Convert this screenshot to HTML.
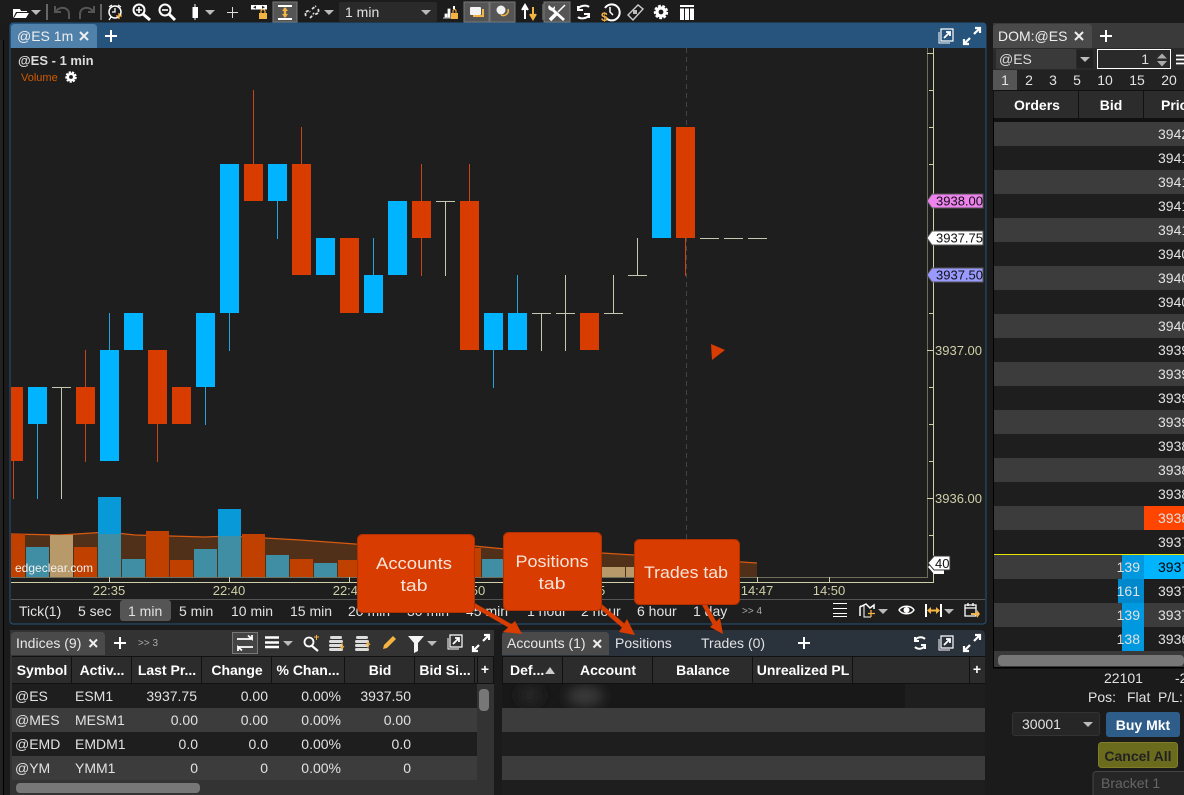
<!DOCTYPE html>
<html><head><meta charset="utf-8"><title>Chart</title>
<style>
html,body{margin:0;padding:0;background:#1b1b1b;width:1184px;height:795px;overflow:hidden}
svg{display:block;position:absolute;left:0;top:0}
text{font-family:"Liberation Sans",sans-serif;font-size:14px;fill:#e2e2e2}
.b{font-weight:bold;fill:#fff}
.m{text-anchor:middle}
.e{text-anchor:end}
.ax{font-size:13px;fill:#cfcfa8}
.c{font-size:17px;fill:#f8e4da;text-anchor:middle}
.w{stroke:#fff;fill:none}
</style></head><body>
<svg width="1184" height="795" viewBox="0 0 1184 795" xmlns="http://www.w3.org/2000/svg">
<defs>
<g id="gear"><circle r="4" fill="none" stroke="#fff" stroke-width="3.2"/><circle r="6" fill="none" stroke="#fff" stroke-width="2.4" stroke-dasharray="2.7 1.5"/></g>
<g id="pop"><path d="M-5-7H7V5H-5Z" class="w" stroke-width="1.2"/><path d="M-7-4V7H4" class="w" stroke-width="1"/><path d="M-2 2L4-4M0-4H4V0" stroke="#fff" stroke-width="1.800" fill="none"/></g>
<g id="full"><path d="M2-2L7-7M3-8H8V-3M-2 2L-7 7M-8 3V8H-3" stroke="#fff" stroke-width="2.2" fill="none"/></g>
<path id="car" d="M0 0H10L5 5Z" fill="#bbb"/>
<filter id="bl" x="-50%" y="-50%" width="200%" height="200%"><feGaussianBlur stdDeviation="6"/></filter>
<clipPath id="rowclip"><rect x="502" y="684" width="403" height="24"/></clipPath>
</defs>

<!-- left strip -->
<rect x="3" y="40" width="1" height="755" fill="#000"/>
<rect x="0" y="40" width="3" height="755" fill="#222"/>

<!-- top toolbar -->
<rect width="1184" height="23" fill="#1c1c1c"/>
<path d="M13 9H20L21 11H27V12H16L13 18ZM14 18L17 13H29L26 18Z" fill="#fff"/>
<use href="#car" x="31" y="10"/>
<rect x="46" y="4" width="2" height="16" fill="#666"/>
<path d="M55 6V12H61M56 11C60 6 69 7 69 14V19" stroke="#555" stroke-width="2" fill="none"/>
<path d="M94 6V12H88M93 11C89 6 80 7 80 14V19" stroke="#555" stroke-width="2" fill="none"/>
<rect x="100" y="4" width="2" height="16" fill="#666"/>
<circle cx="115" cy="12" r="6" class="w" stroke-width="1.5"/><path d="M115 8V12H112M109 7L112 5M118 5L121 7M111 17L109 20" stroke="#fff" stroke-width="1.3" fill="none"/><path d="M116 16H122M119 13V19" stroke="#f5b342" stroke-width="1.3"/>
<circle cx="139" cy="10" r="5.5" class="w" stroke-width="2"/><path d="M136 10H142M139 7V13" stroke="#fff" stroke-width="1.6"/><path d="M143 14L150 20" stroke="#fff" stroke-width="3"/>
<circle cx="165" cy="10" r="5.5" class="w" stroke-width="2"/><path d="M162 10H168" stroke="#fff" stroke-width="1.6"/><path d="M169 14L175 20" stroke="#fff" stroke-width="3"/>
<rect x="192.500" y="7" width="5.500" height="11" fill="#fff"/><path d="M195 4V20" stroke="#fff"/>
<use href="#car" x="205" y="10"/>
<path d="M227 12.500H238M232.500 7V18" stroke="#ddd"/>
<rect x="251" y="5" width="16" height="4.500" fill="#fff"/><path d="M253 7.200L256 5.800V8.700ZM265 7.200L262 5.800V8.700Z" fill="#222"/>
<rect x="259" y="13" width="8" height="6" fill="#f5b342"/><path d="M261 13V11.500A2 2 0 0 1 265 11.500V13" stroke="#f5b342" fill="none" stroke-width="1.200"/>
<rect x="273" y="2" width="24" height="20" fill="#555" stroke="#777"/><path d="M278 6H292M278 19H292" stroke="#fff" stroke-width="2"/><path d="M285 8V17" stroke="#f5b342" stroke-width="2.400"/><path d="M285 7L288 11H282ZM285 18L288 14H282Z" fill="#f5b342"/>
<path d="M306 16C304 13 308 9 310 12M318 9C320 12 316 16 313 13M310 18L313 15M312 9L316 6" stroke="#ddd" stroke-width="1.800" fill="none" stroke-dasharray="3 1"/>
<use href="#car" x="324" y="10"/>
<rect x="339" y="2" width="98" height="20" rx="2" fill="#2a2a2a"/><text x="345" y="17">1 min</text><use href="#car" x="421" y="10"/>
<path d="M443 18H452M445 14H447V17H445ZM448 9H450V17H448Z" fill="#fff" stroke="#fff" stroke-width=".8"/><rect x="451" y="13" width="7" height="6" fill="#f5b342"/><path d="M453 13V11A1.500 1.500 0 0 1 456 11V13" stroke="#f5b342" fill="none"/><rect x="453" y="6" width="2" height="3" fill="#fff"/>
<rect x="464" y="2" width="25" height="20" fill="#555" stroke="#777"/><rect x="490" y="2" width="25" height="20" fill="#555" stroke="#777"/>
<rect x="470" y="7" width="11" height="8" rx="1" fill="#f4f4f4"/><path d="M473 16H483V9" stroke="#f5b342" stroke-width="2" fill="none"/>
<circle cx="501" cy="10" r="4.500" fill="#f0f0f0"/><path d="M508 9A5 5 0 0 1 501 15A5 5 0 0 0 508 9Z" fill="#f5b342" stroke="#f5b342" stroke-width="1.500"/>
<path d="M525 19V8M522 10L525 5L528 10" stroke="#fff" stroke-width="2" fill="#fff"/><path d="M533 7V16M530 14L533 19L536 14" stroke="#f5b342" stroke-width="2" fill="#f5b342"/>
<rect x="542" y="4" width="2" height="16" fill="#555"/><rect x="544" y="2" width="26" height="20" fill="#555" stroke="#777"/>
<path d="M553 10L564 20" stroke="#fff" stroke-width="2.800"/><path d="M549 5C547 8 549 11 553 11C555 10 555 8 555 6L553 8L551 7Z" fill="#fff"/><path d="M565 5L558 12" stroke="#fff" stroke-width="1.500"/><path d="M557 13L550 20" stroke="#fff" stroke-width="3.500"/>
<path d="M578 9C580 5 587 5 589 7M578 6V10H583M589 15C587 19 580 19 578 17M589 18V14H584" stroke="#fff" stroke-width="2" fill="none"/>
<path d="M605 8A8 8 0 1 1 606 18" class="w" stroke-width="2"/><path d="M610 7V12L613 15" class="w" stroke-width="1.500"/><text x="601" y="21" style="font-size:12px;font-weight:bold;fill:#f5b342">$</text>
<path d="M628 15L638 5L643 9L633 20Z" stroke="#ccc" stroke-width="1.400" fill="none"/><rect x="633" y="10" width="4" height="4" fill="#bbb"/>
<use href="#gear" x="661" y="12"/>
<path d="M680 5H694V7H680ZM680 8.500H684V20H680ZM685 8.500H689V20H685ZM690 8.500H694V20H690Z" fill="#fff"/>

<!-- Chart panel -->
<rect x="10" y="23" width="976" height="601" rx="3" fill="#1e1e1e" stroke="#27547c"/>
<path d="M10 48V27Q10 23 14 23H982Q986 23 986 27V48Z" fill="#27547c"/>
<path d="M11 48V28Q11 24 15 24H93Q97 24 97 28V48Z" fill="#4f81aa"/>
<text x="17" y="41" style="font-size:14px;fill:#eee">@ES 1m</text>
<path d="M80 32L88 40M88 32L80 40" stroke="#eee" stroke-width="2"/>
<path d="M105 36H117M111 30V42" stroke="#fff" stroke-width="2"/>
<use href="#pop" x="946" y="36"/><use href="#full" x="972" y="36"/>
<text x="18" y="65" style="font-size:13px;font-weight:bold;fill:#ddd">@ES - 1 min</text>
<text x="21" y="81" style="font-size:11px;fill:#d05a00">Volume</text>
<use href="#gear" x="71" y="77" transform="translate(14.200 15.400) scale(.8)"/>

<!-- crosshair dashed -->
<path d="M686.500 48V540" stroke="#444" stroke-dasharray="5 4"/>

<!-- volume -->
<path d="M11 534L60 535L108 532L135 535L205 537L230 536L300 540L355 544L474 546L505 549L602 553L634 555L757 563V577H11Z" fill="#51301a"/>
<path d="M11 534L60 535L108 532L135 535L205 537L230 536L300 540L355 544L474 546L505 549L602 553L634 555L757 563" fill="none" stroke="#d85a10" stroke-width="1.200"/>
<g fill="#c04000"><rect x="11" y="534" width="14" height="43"/><rect x="74" y="547" width="23" height="30"/><rect x="146" y="531" width="23" height="46"/><rect x="170" y="560" width="23" height="17"/><rect x="242" y="534" width="23" height="43"/><rect x="290" y="559" width="23" height="18"/><rect x="338" y="560" width="23" height="17"/><rect x="458" y="548" width="23" height="29"/></g>
<g fill="#408ea3"><rect x="26" y="547" width="23" height="30"/><rect x="98" y="534" width="23" height="43"/><rect x="122" y="559" width="23" height="18"/><rect x="194" y="549" width="23" height="28"/><rect x="218" y="536" width="23" height="41"/><rect x="266" y="555" width="23" height="22"/><rect x="314" y="563" width="23" height="14"/><rect x="482" y="559" width="23" height="18"/></g>
<g fill="#0899d9"><rect x="98" y="497" width="23" height="37"/><rect x="218" y="509" width="23" height="27"/></g>
<g fill="#b89a6a"><rect x="50" y="535" width="23" height="42"/><rect x="602" y="567" width="23" height="10"/><rect x="626" y="567" width="23" height="10"/></g>
<text x="15" y="572" style="font-size:12px;fill:#f0f0f0">edgeclear.com</text>

<!-- wicks -->
<g stroke-width="1" fill="none">
<path stroke="#c8431a" d="M13.500 461V499M85.500 350V462M157.500 424V462M253.500 90V164M301.500 127V164M421.500 164V276M469.500 164V201M685.500 238V276"/>
<path stroke="#1ea4de" d="M37.500 424V499M109.500 313V350M205.500 387V425M229.500 313V351M277.500 201V239M373.500 238V275M493.500 350V388M517.500 275V313"/>
<path stroke="#c8c8b0" d="M61.500 387V499M445.500 201V276M541.500 313V351M565.500 275V351M613.500 275V313M637.500 238V275"/>
</g>
<g stroke="#c8c8b0" stroke-width="1"><path d="M52 387.500H71M436 201.500H455M532 313.500H551M556 313.500H575M604 313.500H623M628 275.500H647M700 238.500H719M724 238.500H743M748 238.500H767"/></g>
<g fill="#00b4ff"><rect x="28" y="387" width="19" height="37"/><rect x="100" y="350" width="19" height="111"/><rect x="124" y="313" width="19" height="37"/><rect x="196" y="313" width="19" height="74"/><rect x="220" y="164" width="19" height="149"/><rect x="268" y="164" width="19" height="37"/><rect x="316" y="238" width="19" height="37"/><rect x="364" y="275" width="19" height="38"/><rect x="388" y="201" width="19" height="74"/><rect x="484" y="313" width="19" height="37"/><rect x="508" y="313" width="19" height="37"/><rect x="652" y="127" width="19" height="111"/></g>
<g fill="#d83c00"><rect x="11" y="387" width="12" height="74"/><rect x="76" y="387" width="19" height="37"/><rect x="148" y="350" width="19" height="74"/><rect x="172" y="387" width="19" height="37"/><rect x="244" y="164" width="19" height="37"/><rect x="292" y="164" width="19" height="111"/><rect x="340" y="238" width="19" height="75"/><rect x="412" y="201" width="19" height="37"/><rect x="460" y="201" width="19" height="149"/><rect x="580" y="313" width="19" height="37"/><rect x="676" y="127" width="19" height="111"/></g>
<path d="M711 344L725 350L712 360Z" fill="#d83c00"/>

<!-- axes -->
<path d="M927.500 48V577.500H11" stroke="#6e6e5c" fill="none"/>
<path d="M933.500 48V582.500H11" stroke="#cfcfa8" fill="none"/>
<g stroke="#cfcfa8"><path d="M927 53.500H933M929 90.500H933M929 127.500H933M929 164.500H933M927 201.500H933M929 238.500H933M929 276.500H933M929 313.500H933M927 350.500H933M929 387.500H933M929 424.500H933M929 461.500H933M927 498.500H933M929 535.500H933M109.500 577V582M229.500 577V582M349.500 577V582M469.500 577V582M589.500 577V582M757.500 577V582M829.500 577V582"/></g>
<text x="935" y="355" style="font-size:13px;fill:#cfcfa8">3937.00</text><text x="935" y="503" style="font-size:13px;fill:#cfcfa8">3936.00</text>
<g><text class="ax m" x="109" y="595">22:35</text><text class="ax m" x="229" y="595">22:40</text><text class="ax m" x="349" y="595">22:45</text><text class="ax m" x="469" y="595">22:50</text><text class="ax m" x="589" y="595">22:55</text><text class="ax m" x="757" y="595">14:47</text><text class="ax m" x="829" y="595">14:50</text></g>

<!-- price labels -->
<g stroke="#555"><path d="M927 201L932 194H983V208H932Z" fill="#ee82ee"/><path d="M927 238L932 231H983V245H932Z" fill="#fff"/><path d="M927 275L932 268H983V282H932Z" fill="#9999ff"/></g>
<g><text x="936" y="205.500" style="font-size:13px;fill:#111">3938.00</text><text x="936" y="242.500" style="font-size:13px;fill:#111">3937.75</text><text x="936" y="279.500" style="font-size:13px;fill:#111">3937.50</text></g>
<path d="M928 567L934 561H944V574H934Z" fill="#fff"/>
<path d="M928 563L934 556H950V570H934Z" fill="#fff" stroke="#333"/><text x="935" y="568" style="font-size:13px;fill:#111">40</text>

<!-- chart bottom bar -->
<path d="M11 599.500H985" stroke="#555"/>
<rect x="120" y="600" width="51" height="21" rx="3" fill="#555"/>
<g><text x="19" y="616">Tick(1)</text><text x="78" y="616">5 sec</text><text x="128" y="616">1 min</text><text x="179" y="616">5 min</text><text x="231" y="616">10 min</text><text x="290" y="616">15 min</text><text x="348" y="616">20 min</text><text x="407" y="616">30 min</text><text x="466" y="616">45 min</text><text x="527" y="616">1 hour</text><text x="581" y="616">2 hour</text><text x="637" y="616">6 hour</text><text x="693" y="616">1 day</text><text x="742" y="614" style="font-size:10px;fill:#aaa">&gt;&gt; 4</text></g>
<path d="M833 603.500H847M833 608.500H847M833 613.500H847M833 616.500H847" stroke="#fff"/>
<path d="M860 616V607L866 604L870 608L874 605V609" class="w" stroke-width="1.500"/><path d="M860 606H864V617H871" class="w" stroke-width="1"/><path d="M871 610V617M868 613.500H875" stroke="#f5b342" stroke-width="1.300"/>
<use href="#car" x="878" y="609"/>
<path d="M899 610C902 605 911 605 914 610C911 615 902 615 899 610Z" class="w" stroke-width="1.400"/><circle cx="906.500" cy="610" r="3" fill="#fff"/>
<path d="M926 604V617M941 604V617" stroke="#fff" stroke-width="2"/><path d="M930 610.500H937" stroke="#f5b342" stroke-width="2"/><path d="M927 610.500L931 607V614ZM940 610.500L936 607V614Z" fill="#f5b342"/>
<use href="#car" x="944" y="609"/>
<path d="M965 605H976V616H965Z" class="w" stroke-width="1.300"/><path d="M965 608H976M968 603V606M973 603V606" stroke="#fff" stroke-width="1.300"/><path d="M971 613H977V610L980 614L977 618V615H971Z" fill="#f5b342"/>

<!-- Indices panel -->
<rect x="10" y="630" width="484" height="165" fill="#333"/>
<path d="M11 655V636Q11 632 15 632H101Q105 632 105 636V655Z" fill="#4a4a4a"/>
<text x="16" y="648" style="fill:#e8e8e8">Indices (9)</text>
<path d="M89.500 639.500L97 647M97 639.500L89.500 647" stroke="#eee" stroke-width="2"/>
<path d="M114 643H126M120 637V649" stroke="#fff" stroke-width="2"/>
<text x="138" y="646" style="font-size:10px;fill:#aaa">&gt;&gt; 3</text>
<rect x="232.500" y="632.500" width="25" height="21" fill="#444" stroke="#777"/>
<path d="M237 639H252M248 635.500L252 639V635M253 647H238M242 650.500L238 647V651" stroke="#fff" stroke-width="1.800" fill="none"/>
<path d="M265 637.500H279M265 642.500H279M265 647H279" stroke="#fff" stroke-width="2.500"/><use href="#car" x="283" y="641" />
<circle cx="309" cy="642" r="4.500" class="w" stroke-width="1.800"/><path d="M312 646L318 651" stroke="#fff" stroke-width="2.200"/><path d="M314 637H319M316.500 635V640" stroke="#f5b342"/>
<g fill="#ddd"><rect x="329" y="640" width="14" height="3" rx="1.500"/><rect x="329" y="644" width="14" height="3" rx="1.500"/><rect x="329" y="648" width="14" height="3" rx="1.500"/><rect x="330" y="636" width="12" height="3" rx="1.500"/></g><path d="M342 642V648M340 646L342 649L344 646" stroke="#f5b342" fill="none"/>
<g fill="#ddd"><rect x="355" y="640" width="14" height="3" rx="1.500"/><rect x="355" y="644" width="14" height="3" rx="1.500"/><rect x="355" y="648" width="14" height="3" rx="1.500"/><rect x="356" y="636" width="12" height="3" rx="1.500"/></g><path d="M368 643V649M366 645L368 642L370 645" stroke="#f5b342" fill="none"/>
<path d="M383 649L384 645L393 636L396 639L387 648Z" fill="#f5b342"/>
<path d="M408 636H424L418 643V651L414 653V643Z" fill="#f4f4f4"/><use href="#car" x="427" y="641"/>
<use href="#pop" x="455" y="642"/><use href="#full" x="481" y="643"/>

<!-- Indices table -->
<rect x="12" y="656" width="482" height="28" fill="#111"/>
<g fill="#2c2c2c"><rect x="12" y="657" width="59" height="26"/><rect x="72" y="657" width="59" height="26"/><rect x="132" y="657" width="69" height="26"/><rect x="202" y="657" width="69" height="26"/><rect x="272" y="657" width="72" height="26"/><rect x="345" y="657" width="69" height="26"/><rect x="415" y="657" width="59" height="26"/><rect x="475" y="657" width="2" height="26"/><rect x="478" y="657" width="15" height="26"/></g>
<g font-weight="bold"><text class="b m" x="42" y="675">Symbol</text><text class="b m" x="102" y="675">Activ...</text><text class="b m" x="167" y="675">Last Pr...</text><text class="b m" x="237" y="675">Change</text><text class="b m" x="308" y="675">% Chan...</text><text class="b m" x="380" y="675">Bid</text><text class="b m" x="445" y="675">Bid Si...</text><text class="b m" x="485" y="674">+</text></g>
<rect x="12" y="684" width="465" height="24" fill="#1e1e1e"/><rect x="12" y="708" width="465" height="24" fill="#3c3c3c"/><rect x="12" y="732" width="465" height="24" fill="#1e1e1e"/><rect x="12" y="756" width="465" height="24" fill="#3c3c3c"/>
<rect x="479" y="689" width="10" height="22" rx="4" fill="#777"/>
<rect x="16" y="783" width="184" height="10" rx="4" fill="#777"/>
<g><text x="15" y="701">@ES</text><text x="75" y="701">ESM1</text><text class="e" x="197" y="701">3937.75</text><text class="e" x="268" y="701">0.00</text><text class="e" x="341" y="701">0.00%</text><text class="e" x="411" y="701">3937.50</text>
<text x="15" y="725">@MES</text><text x="75" y="725">MESM1</text><text class="e" x="198" y="725">0.00</text><text class="e" x="268" y="725">0.00</text><text class="e" x="341" y="725">0.00%</text><text class="e" x="411" y="725">0.00</text>
<text x="15" y="749">@EMD</text><text x="75" y="749">EMDM1</text><text class="e" x="198" y="749">0.0</text><text class="e" x="268" y="749">0.0</text><text class="e" x="341" y="749">0.00%</text><text class="e" x="411" y="749">0.0</text>
<text x="15" y="773">@YM</text><text x="75" y="773">YMM1</text><text class="e" x="198" y="773">0</text><text class="e" x="268" y="773">0</text><text class="e" x="341" y="773">0.00%</text><text class="e" x="411" y="773">0</text></g>

<!-- Accounts panel -->
<path d="M502 656V635Q502 630 507 630H980Q985 630 985 635V656Z" fill="#2a323c"/>
<rect x="502" y="656" width="483" height="139" fill="#1e1e1e"/>
<path d="M502 655V636Q502 632 506 632H605Q609 632 609 636V655Z" fill="#4a4a4a"/>
<text x="507" y="648" style="fill:#e8e8e8">Accounts (1)</text>
<path d="M593.500 640L601 647.500M601 640L593.500 647.500" stroke="#eee" stroke-width="2"/>
<text x="615" y="648">Positions</text><text x="701" y="648">Trades (0)</text>
<path d="M798 643H810M804 637V649" stroke="#fff" stroke-width="2"/>
<path d="M915 641C916 637 922 636 925 639M915 637V641H919M925 645C924 649 918 650 915 647M925 649V645H921" stroke="#fff" stroke-width="2" fill="none"/>
<use href="#pop" x="946" y="643"/><use href="#full" x="972" y="643"/>
<rect x="502" y="656" width="483" height="28" fill="#111"/>
<g fill="#2c2c2c"><rect x="503" y="657" width="59" height="26"/><rect x="563" y="657" width="89" height="26"/><rect x="653" y="657" width="99" height="26"/><rect x="753" y="657" width="99" height="26"/><rect x="853" y="657" width="116" height="26"/><rect x="970" y="657" width="15" height="26"/></g>
<text class="b" x="510" y="675">Def...</text><path d="M545 674L550 667L555 674Z" fill="#ccc"/>
<text class="b m" x="608" y="675">Account</text><text class="b m" x="703" y="675">Balance</text><text class="b m" x="803" y="675">Unrealized PL</text><text class="b m" x="977" y="674">+</text>
<rect x="502" y="684" width="403" height="24" fill="#181818"/>
<g clip-path="url(#rowclip)"><ellipse cx="530" cy="695" rx="12" ry="9" fill="#262626" filter="url(#bl)"/><ellipse cx="585" cy="696" rx="18" ry="10" fill="#3a3a3a" filter="url(#bl)"/></g>
<rect x="502" y="708" width="483" height="24" fill="#3c3c3c"/><rect x="502" y="756" width="483" height="24" fill="#3c3c3c"/>

<!-- DOM -->
<rect x="993" y="23" width="191" height="25" fill="#3a3a3a"/>
<path d="M993 48V28Q993 24 997 24H1088Q1092 24 1092 28V48Z" fill="#4a4a4a"/>
<text x="998" y="41" style="fill:#eee">DOM:@ES</text>
<path d="M1075 32L1083 40M1083 32L1075 40" stroke="#eee" stroke-width="2"/>
<path d="M1100 36H1112M1106 30V42" stroke="#fff" stroke-width="2"/>
<rect x="993" y="48" width="191" height="22" fill="#2a2a2a"/>
<rect x="996" y="49" width="80" height="20" fill="#3a3a3a"/><text x="999" y="64" style="fill:#ddd">@ES</text>
<rect x="1077" y="50" width="16" height="18" fill="#222"/><use href="#car" x="1080" y="57"/>
<rect x="1097.500" y="49.500" width="73" height="19" fill="#2a2a2a" stroke="#fff"/><text class="e" x="1149" y="64" style="fill:#ddd">1</text>
<path d="M1157 58.500L1162 53.500L1167 58.500ZM1157 61L1162 66.500L1167 61Z" fill="#aaa"/>
<path d="M1176 55.500H1184M1176 59.500H1184M1176 63.500H1184" stroke="#fff" stroke-width="1.800"/>
<rect x="993" y="70" width="191" height="20" fill="#222"/><rect x="993" y="70" width="24" height="20" fill="#555"/>
<text class="m" x="1005" y="85">1</text><text class="m" x="1029" y="85">2</text><text class="m" x="1053" y="85">3</text><text class="m" x="1077" y="85">5</text><text class="m" x="1105" y="85">10</text><text class="m" x="1137" y="85">15</text><text class="m" x="1169" y="85">20</text>
<rect x="993" y="90" width="191" height="32" fill="#111"/>
<g fill="#2c2c2c"><rect x="994" y="91" width="84" height="27"/><rect x="1079" y="91" width="64" height="27"/><rect x="1144" y="91" width="40" height="27"/></g>
<text class="b m" x="1037" y="110">Orders</text><text class="b m" x="1111" y="110">Bid</text><text class="b" x="1161" y="110">Price</text>
<rect x="993" y="118" width="1" height="550" fill="#000"/>
<rect x="994" y="118" width="190" height="550" fill="#1e1e1e"/>
<rect x="994" y="118" width="190" height="4" fill="#111"/>
<g fill="#3c3c3c"><rect x="994" y="122" width="190" height="24"/><rect x="994" y="170" width="190" height="24"/><rect x="994" y="218" width="190" height="24"/><rect x="994" y="266" width="190" height="24"/><rect x="994" y="314" width="190" height="24"/><rect x="994" y="362" width="190" height="24"/><rect x="994" y="410" width="190" height="24"/><rect x="994" y="458" width="190" height="24"/><rect x="994" y="506" width="190" height="24"/><rect x="994" y="555" width="190" height="24"/><rect x="994" y="603" width="190" height="24"/></g>
<rect x="1144" y="506" width="40" height="24" fill="#ff4500"/>
<rect x="994" y="554" width="190" height="1" fill="#e6e600"/>
<rect x="1144" y="555" width="40" height="24" fill="#00b4ff"/>
<rect x="1122" y="555" width="22" height="24" fill="#0099e0"/><rect x="1118" y="579" width="26" height="24" fill="#0088cc"/><rect x="1122" y="603" width="22" height="24" fill="#0099e0"/><rect x="1122" y="627" width="22" height="24" fill="#0099e0"/>
<g><text x="1158" y="139">3942</text><text x="1158" y="163">3941</text><text x="1158" y="187">3941</text><text x="1158" y="211">3941</text><text x="1158" y="235">3941</text><text x="1158" y="259">3940</text><text x="1158" y="283">3940</text><text x="1158" y="307">3940</text><text x="1158" y="331">3940</text><text x="1158" y="355">3939</text><text x="1158" y="379">3939</text><text x="1158" y="403">3939</text><text x="1158" y="427">3939</text><text x="1158" y="451">3938</text><text x="1158" y="475">3938</text><text x="1158" y="499">3938</text><text x="1158" y="523">3938</text><text x="1158" y="547">3937</text><text x="1158" y="572" style="fill:#000">3937</text><text x="1158" y="596">3937</text><text x="1158" y="620">3937</text><text x="1158" y="644">3936</text></g>
<text class="e" x="1140" y="572">139</text><text class="e" x="1140" y="596">161</text><text class="e" x="1140" y="620">139</text><text class="e" x="1140" y="644">138</text>
<rect x="994" y="651" width="190" height="16" fill="#3a3a3a"/><rect x="998" y="655" width="186" height="11" rx="4" fill="#777"/>
<rect x="993" y="667" width="191" height="1.500" fill="#000"/>
<text x="1104" y="683">22101</text><text x="1175" y="683">-2</text>
<text x="1088" y="702">Pos:</text><text x="1127" y="702">Flat</text><text x="1158" y="702">P/L:</text>
<rect x="1012.500" y="712.500" width="87" height="23" rx="2" fill="#262626" stroke="#333"/><text x="1022" y="729">30001</text><use href="#car" x="1083" y="722"/>
<rect x="1106" y="712" width="74" height="25" rx="3" fill="#2f5d8a"/><text class="b m" x="1143" y="730">Buy Mkt</text>
<rect x="1098.500" y="742.500" width="79" height="25" rx="3" fill="#6b6b1e" stroke="#7d7d2a"/><text class="m" x="1138" y="761" style="font-weight:bold;fill:#222">Cancel All</text>
<rect x="1093" y="771.500" width="100" height="26" rx="3" fill="#262626" stroke="#444"/><text x="1101" y="788" style="fill:#666">Bracket 1</text>

<!-- callouts -->
<g stroke="#d83c00" stroke-width="4.500" fill="none"><path d="M470 603L512 627"/><path d="M597 603L626 628"/><path d="M703 602L716 626"/></g>
<g fill="#d83c00">
<path d="M522 634L515 621L503 632Z"/>
<path d="M635 635L627 619L619 632Z"/>
<path d="M723 634L720 618L710 627Z"/>
</g>
<g fill="#d83c00" stroke="#b03000">
<rect x="357.500" y="534.500" width="117" height="78" rx="5"/>
<rect x="503.500" y="532.500" width="98" height="78" rx="5"/>
<rect x="634.500" y="539.500" width="105" height="65" rx="5"/>
</g>
<text class="c" x="414" y="569" textLength="76" lengthAdjust="spacingAndGlyphs">Accounts</text><text class="c" x="414" y="591" textLength="27" lengthAdjust="spacingAndGlyphs">tab</text>
<text class="c" x="552" y="567" textLength="73" lengthAdjust="spacingAndGlyphs">Positions</text><text class="c" x="552" y="589" textLength="27" lengthAdjust="spacingAndGlyphs">tab</text>
<text class="c" x="686" y="578" textLength="84" lengthAdjust="spacingAndGlyphs">Trades tab</text>
</svg>
</body></html>
